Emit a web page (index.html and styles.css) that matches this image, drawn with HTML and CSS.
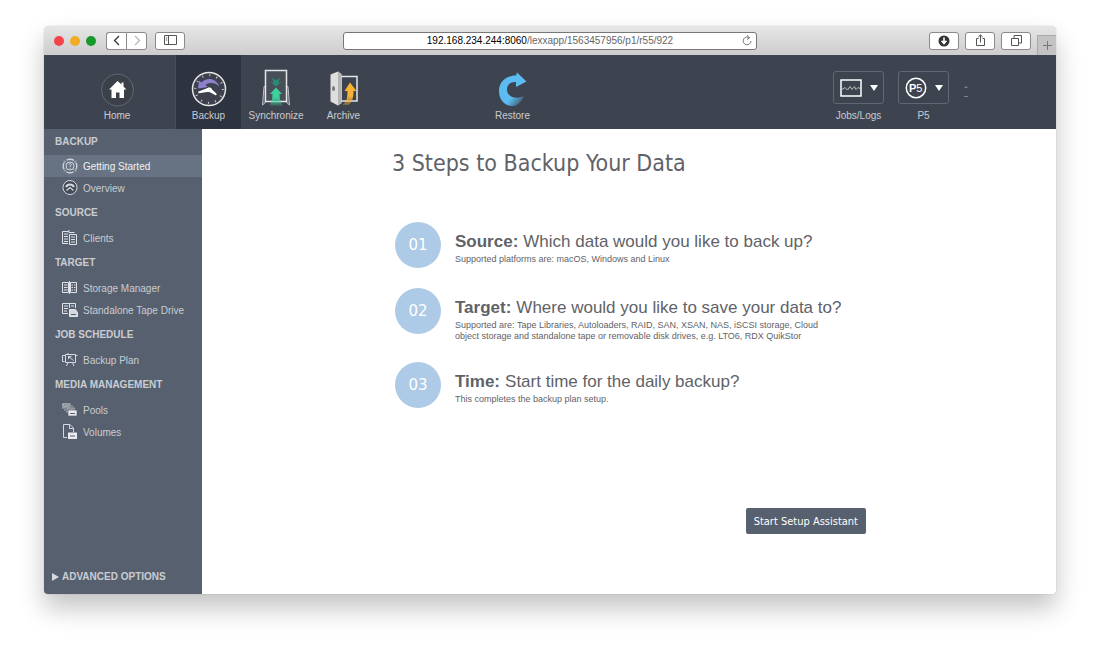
FILE: index.html
```
<!DOCTYPE html>
<html lang="en">
<head>
    <meta charset="UTF-8">
    <meta name="viewport" content="width=device-width, initial-scale=1.0">
    <title>Getting Started</title>
    <link rel="stylesheet" href="styles.css">
</head>
<body>
    <div class="window">
        <div class="titlebar">
            <div class="titlebar-left">
                <div class="lights">
                    <span class="light red"></span>
                    <span class="light yellow"></span>
                    <span class="light green"></span>
                </div>
                <div class="history">
                    <button class="chrome-btn" aria-label="Back">
                        <svg width="8" height="11" viewBox="0 0 8 11" fill="none" stroke="#333" stroke-width="1.3"><path d="M6 1 1.5 5.5 6 10"/></svg>
                    </button>
                    <button class="chrome-btn" aria-label="Forward">
                        <svg width="8" height="11" viewBox="0 0 8 11" fill="none" stroke="#b5b5b5" stroke-width="1.2"><path d="M2 1 6.5 5.5 2 10"/></svg>
                    </button>
                </div>
                <button class="chrome-btn wide" aria-label="Sidebar">
                    <svg width="13" height="11" viewBox="0 0 13 11" fill="none" stroke="#555"><path d="M.5.5h12v9H.5zM4.5.5v9M1.8 3h1.4M1.8 5h1.4"/></svg>
                </button>
            </div>
            <div class="address" role="textbox" aria-label="Address" contenteditable="true" spellcheck="false">
                <span class="url"><span class="host">192.168.234.244:8060</span>/lexxapp/1563457956/p1/r55/922</span>
                <svg class="reload" width="10" height="11" viewBox="0 0 10 11" fill="none" stroke="#777"><path d="M7.5 2.8A3.9 3.9 0 1 0 9 6M5 .3 7.6 2.8 5 4.5"/></svg>
            </div>
            <div class="titlebar-right">
                <button class="chrome-btn wide" aria-label="Downloads">
                    <svg width="12" height="12" viewBox="0 0 12 12"><circle cx="6" cy="6" r="5.5" fill="#333"/><path d="M6 2.6v5M3.6 5.8 6 8.6l2.4-2.8" fill="none" stroke="#fff" stroke-width="1.6"/></svg>
                </button>
                <button class="chrome-btn wide" aria-label="Share">
                    <svg width="11" height="13" viewBox="0 0 11 13" fill="none" stroke="#555"><path d="M3.5 4.5h-2v7h8v-7h-2M5.5 8.5V1M3.3 3 5.5.9 7.7 3"/></svg>
                </button>
                <button class="chrome-btn wide" aria-label="Tabs">
                    <svg width="11" height="11" viewBox="0 0 11 11" fill="none" stroke="#555"><path d="M.5 3.5h7v7h-7zM3 3.5V.5h7.5V8h-3"/></svg>
                </button>
                <button class="new-tab" aria-label="New tab">
                    <svg width="9" height="9" viewBox="0 0 9 9" stroke="#777"><path d="M4.5 0v9M0 4.5h9"/></svg>
                </button>
            </div>
        </div>

        <div class="toolbar">
            <a class="tool home" href="#">
                <svg class="tool-icon" width="34" height="34" viewBox="0 0 34 34"><circle cx="17.5" cy="17" r="16" fill="#3b4049" stroke="#626873"/><path d="M17.5 8 9 16.5h2.5V25H16v-5.500h3.500V25H24v-8.500h2.500L23.500 13.500V9.500h-2v2z" fill="#fff"/></svg>
                <span>Home</span>
            </a>
            <a class="tool active" href="#">
                <svg class="tool-icon" width="36" height="36" viewBox="0 0 36 36">
                    <circle cx="18" cy="18" r="16.5" fill="#3c414d" stroke="#e8e8e8" stroke-width="1.5"/>
                    <circle cx="18" cy="18" r="13.8" fill="none" stroke="#d0d2d8" stroke-width="2.2" stroke-dasharray=".9 6.325"/>
                    <path d="M7 17.5 8 9.500l2.500 2C15 6 25 6.500 28.500 15.500 24 11.500 18 11 14.500 14l2.500 2z" fill="#8e80cf"/>
                    <path d="M18 16.500 7 20.800l.7 1.400L18 20.800l7 3.700.8-1.500-4.800-4.500z" fill="#fff"/>
                    <circle cx="18.5" cy="18.8" r="2.4" fill="#fff"/>
                </svg>
                <span>Backup</span>
            </a>
            <a class="tool sync" href="#">
                <svg class="tool-icon" width="30" height="38" viewBox="0 0 30 38">
                    <defs><linearGradient id="green" x1="0" y1="0" x2="0" y2="1"><stop offset=".55" stop-color="#3ecf9e"/><stop offset="1" stop-color="#3ecf9e" stop-opacity=".25"/></linearGradient></defs>
                    <path d="M5 17.5H3L1.500 36l4-3.500h19l4 3.500L27 17.500h-2" fill="#59606b" stroke="#b9bdc4"/>
                    <path d="M4.500 1.500h21v31h-21z" fill="#484f59" stroke="#e4e6e8" stroke-width="1.5"/>
                    <path d="m11 9 4 2 4-2-1.500 4.500h2.500l-5 4-5-4h2.500z" fill="#2d8874"/>
                    <path d="M15 18.500 9 25h2.500c0 5-1 8-3 11.500h13C19.500 33 18.500 30 18.500 25H21z" fill="url(#green)"/>
                </svg>
                <span>Synchronize</span>
            </a>
            <a class="tool" href="#">
                <svg class="tool-icon" width="30" height="38" viewBox="0 0 30 38">
                    <defs><linearGradient id="gold" x1="0" y1="0" x2="0" y2="1"><stop offset=".6" stop-color="#f9b233"/><stop offset="1" stop-color="#f9b233" stop-opacity=".3"/></linearGradient></defs>
                    <path d="M12 7.500h16V32H12z" fill="#3c434e" stroke="#e4e6e8" stroke-width="1.5"/>
                    <path d="M1.500 5.500 9 2.500l3.500 2.800V34L9 36.500l-7.500-4z" fill="#dedede"/>
                    <path d="M9 2.500v34l3.500-2.500V5.300z" fill="#b4b4b4"/>
                    <ellipse cx="4.5" cy="19.5" rx="1.5" ry="2.5" fill="#77797d"/>
                    <path d="M21 13.500 15.500 22h3c0 7-1 11-5 14h6c4-3 5-8 5-14h3z" fill="url(#gold)"/>
                </svg>
                <span>Archive</span>
            </a>
            <a class="tool restore" href="#">
                <svg class="tool-icon" width="32" height="36" viewBox="0 0 32 36">
                    <defs><linearGradient id="blue" x1="0" y1="0" x2="1" y2="1"><stop offset=".6" stop-color="#5cbcf2"/><stop offset=".9" stop-color="#5cbcf2" stop-opacity=".1"/></linearGradient></defs>
                    <path d="M20 1.500 29.500 10.500 19 16v-5c-6-.5-9 3-9 7.500 0 7 8 10 16.500 7C24 32 19 35.500 14.500 35 7 34.500 2 28 2 20 2 11 9 4.500 19 4.500z" fill="url(#blue)"/>
                </svg>
                <span>Restore</span>
            </a>
            <div class="tool menu">
                <button class="menu-btn" id="jobs" aria-labelledby="jobs-label">
                    <svg width="22" height="20" viewBox="0 0 22 20" fill="none"><path d="M1 2h20v16H1z" stroke="#fff" stroke-width="1.5"/><path d="M2 11.500l3-2 2.500 2.500L10 8.500l2 3 2.500-3 1.500 3 2-2 2 1" stroke="#b8bcc3"/></svg>
                    <svg width="8" height="7" viewBox="0 0 8 7"><path d="M0 1h8L4 7z" fill="#fff"/></svg>
                </button>
                <label id="jobs-label" for="jobs">Jobs/Logs</label>
            </div>
            <div class="tool menu">
                <button class="menu-btn" id="p5" aria-labelledby="p5-label">
                    <svg width="22" height="22" viewBox="0 0 22 22"><circle cx="11" cy="11" r="9.7" fill="none" stroke="#fff" stroke-width="1.5"/><text class="logo" x="4" y="15"><tspan class="logo-p">P</tspan>5</text></svg>
                    <svg width="8" height="7" viewBox="0 0 8 7"><path d="M0 1h8L4 7z" fill="#fff"/></svg>
                </button>
                <label id="p5-label" for="p5">P5</label>
            </div>
            <svg class="grip" width="6" height="12" viewBox="0 0 6 12" fill="#7c828c"><path d="M3 0 5 2H1zM1 10h4v1H1z"/></svg>
        </div>

        <div class="content">
            <nav class="sidebar">
                <h2>BACKUP</h2>
                <a class="active" href="#">
                    <svg width="16" height="16" viewBox="0 0 16 16" fill="none" stroke="#cdd2d8"><circle cx="8" cy="8" r="6.8" stroke-width="1.4" stroke-dasharray="7.5 3.18" stroke-dashoffset="3.7"/><circle cx="8" cy="8" r="4"/><path d="M6.800 6.800c0-1.800 2.600-1.500 2.400 0C9 7.800 8 7.800 8 9M8 9.800v1M2 2.500 4 4.500M14 2.500l-2 2M2 13.500l2-2M14 13.500l-2-2"/></svg>
                    Getting Started
                </a>
                <a href="#">
                    <svg width="16" height="16" viewBox="0 0 16 16" fill="none" stroke="#d5d9de"><circle cx="8" cy="7.5" r="7" fill="#434b58"/><path d="M4 7C5.500 3.500 10.500 3.500 12 7" stroke-width="2"/><path d="M4.500 10.500 8 7.500l3.500 3" stroke-width="1.3"/></svg>
                    Overview
                </a>
                <h2>SOURCE</h2>
                <a href="#">
                    <svg width="16" height="16" viewBox="0 0 16 16" fill="none" stroke="#dfe2e6"><path d="M6 13.500H.5V1.500H7V0M2 4h4M2 6.500h4M2 9h4M2 11.500h4M6.500 2.500h6M7.500 4.500h7v10h-7zM9 7h4M9 9.500h4M9 12h4"/></svg>
                    Clients
                </a>
                <h2>TARGET</h2>
                <a href="#">
                    <svg width="16" height="16" viewBox="0 0 16 16" fill="none" stroke="#dfe2e6"><path d="M.5 2.500h6v10h-6zM8.500 2.500h6v10h-6zM2 5h3.500M2 7.500h3.500M2 10h3.500M9.500 5h1.500M12 5h1.500M9.500 7.500h1.500M12 7.500h1.500M9.500 10h1.500M12 10h1.500M7.500 1v13"/></svg>
                    Storage Manager
                </a>
                <a href="#">
                    <svg width="16" height="16" viewBox="0 0 16 16" fill="none" stroke="#dfe2e6"><path d="M6 11.500H.5V1.500h13V6M7.500 1.500V6M2 4h4M2 6.500h4M2 9h3M9 4h3"/><path d="M7.500 7.500h6l2 3v4h-8z" fill="#d5d9de"/><path d="M9 12.500h5" stroke="#57606e"/></svg>
                    Standalone Tape Drive
                </a>
                <h2>JOB SCHEDULE</h2>
                <a href="#">
                    <svg width="16" height="16" viewBox="0 0 16 16" fill="none" stroke="#d5d9de"><path d="M3.500 2.500h10v8h-10zM6 1v1.500M3.500 3.500h-3v6h2M13.500 3.500h2M6.500 4.500l5 4M6.500 4.500V7M6.500 4.500h3M6 10.500 4.500 14M10.500 10.500 12 14"/></svg>
                    Backup Plan
                </a>
                <h2>MEDIA MANAGEMENT</h2>
                <a href="#">
                    <svg width="16" height="16" viewBox="0 0 16 16" fill="#b9bfc7" stroke="#57606e" stroke-width=".7"><path d="M0 1h9v6H0zM2 3h9v6H2zM4 5h9v6H4z"/><path d="M6 8h9v6H6z" fill="#e9ebee"/><path d="M8 11.500h5" stroke-width="1"/></svg>
                    Pools
                </a>
                <a href="#">
                    <svg width="16" height="16" viewBox="0 0 16 16" fill="none" stroke="#d5d9de"><path d="M5 13.500H1.500V.5H8L11.500 4v4M7.500.5v4h4"/><path d="M6 8.500h9V15H6z" fill="#e9ebee" stroke="none"/><path d="M8 12h5" stroke="#57606e"/></svg>
                    Volumes
                </a>
                <button class="advanced">
                    <svg width="7" height="8" viewBox="0 0 7 8"><path d="M0 0 7 4 0 8z" fill="#d5d9de"/></svg>
                    ADVANCED OPTIONS
                </button>
            </nav>

            <main>
                <div class="guide">
                    <h1>3 Steps to Backup Your Data</h1>
                    <ol class="steps">
                        <li>
                            <span class="number">01</span>
                            <div class="step-text">
                                <h3><b>Source:</b>Which data would you like to back up?</h3>
                                <p>Supported platforms are: macOS, Windows and Linux</p>
                            </div>
                        </li>
                        <li>
                            <span class="number">02</span>
                            <div class="step-text">
                                <h3><b>Target:</b>Where would you like to save your data to?</h3>
                                <p>Supported are: Tape Libraries, Autoloaders, RAID, SAN, XSAN, NAS, iSCSI storage, Cloud object storage and standalone tape or removable disk drives, e.g. LTO6, RDX QuikStor</p>
                            </div>
                        </li>
                        <li>
                            <span class="number">03</span>
                            <div class="step-text">
                                <h3><b>Time:</b>Start time for the daily backup?</h3>
                                <p>This completes the backup plan setup.</p>
                            </div>
                        </li>
                    </ol>
                    <button class="start">Start Setup Assistant</button>
                </div>
            </main>
        </div>
    </div>
</body>
</html>
```
FILE: styles.css
```
* {
    box-sizing: border-box;
}
body {
    margin: 0;
    min-height: 100vh;
    padding: 26px 44px 63px;
    display: flex;
    background: #fff;
    font-family: "Liberation Sans", Arial, sans-serif;
    font-size: 10px;
}
button {
    font: inherit;
    cursor: pointer;
}
a {
    text-decoration: none;
}
h1, h2, h3, p, ol {
    margin: 0;
    padding: 0;
    font-weight: normal;
}
.window {
    flex: 1;
    display: flex;
    flex-direction: column;
    border-radius: 5px 5px 4px 4px;
    overflow: hidden;
    box-shadow: 0 0 1px rgba(0, 0, 0, 0.4), 0 14px 26px rgba(0, 0, 0, 0.24);
}

/* browser bar */
.titlebar {
    display: grid;
    grid-template-columns: 1fr 41% 1fr;
    align-items: center;
    height: 29px;
    background: linear-gradient(#e6e6e6, #cdcdcd);
}
.titlebar-left, .titlebar-right, .lights, .history {
    display: flex;
    align-items: center;
}
.titlebar-left {
    gap: 8px;
    padding-left: 10px;
}
.lights {
    gap: 6px;
    margin-right: 2px;
}
.light {
    width: 10px;
    height: 10px;
    border-radius: 50%;
}
.red {
    background: #f4434a;
}
.yellow {
    background: #f3ac25;
}
.green {
    background: #17982c;
}
.chrome-btn {
    display: flex;
    align-items: center;
    justify-content: center;
    width: 20px;
    height: 18px;
    padding: 0;
    background: #fff;
    border: 1px solid #8a8a8a;
    border-radius: 3px;
}
.chrome-btn.wide {
    width: 30px;
}
.history .chrome-btn:first-child {
    border-right: none;
    border-radius: 3px 0 0 3px;
}
.history .chrome-btn:last-child {
    border-radius: 0 3px 3px 0;
    width: 21px;
}
.address {
    display: flex;
    align-items: center;
    height: 18px;
    padding: 0 4px 0 14px;
    background: #fff;
    border: 1px solid #777;
    border-radius: 3px;
    color: #666;
    white-space: nowrap;
}
.url {
    flex: 1;
    text-align: center;
}
.host {
    color: #000;
}
.titlebar-right {
    justify-content: flex-end;
    gap: 6px;
    height: 29px;
}
.new-tab {
    align-self: flex-end;
    display: flex;
    align-items: center;
    justify-content: center;
    width: 19px;
    height: 20px;
    padding: 0;
    background: #c3c3c3;
    border: 1px solid #a9a9a9;
    border-width: 1px 0 0 1px;
}

/* main toolbar */
.toolbar {
    display: flex;
    align-items: stretch;
    height: 74px;
    padding-right: 87px;
    background: #3e444f;
}
.tool {
    display: flex;
    flex-direction: column;
    align-items: center;
    justify-content: flex-end;
    gap: 3px;
    width: 65px;
    padding-bottom: 7px;
    color: #c9ccd1;
    line-height: 12px;
}
.tool.home {
    width: 132px;
    padding-right: 1px;
    padding-left: 16px;
    border-right: 1px solid #484e59;
}
.tool.active {
    background: #2d333f;
}
.tool.sync {
    width: 70px;
}
.tool.restore {
    margin-left: 104px;
    margin-right: auto;
}
.tool.menu {
    gap: 6px;
}
.menu-btn {
    display: flex;
    align-items: center;
    justify-content: center;
    gap: 8px;
    width: 51px;
    height: 33px;
    padding: 0;
    background: transparent;
    border: 1px solid #616772;
    border-radius: 3px;
}
.logo {
    fill: #fff;
    font-size: 11px;
}
.logo-p {
    font-weight: bold;
}
.grip {
    align-self: center;
    margin-left: 7px;
}

/* sidebar */
.content {
    flex: 1;
    display: flex;
}
.sidebar {
    display: flex;
    flex-direction: column;
    width: 158px;
    background: #57606e;
    color: #c9cdd3;
}
.sidebar h2 {
    padding-left: 11px;
    font-size: 10px;
    font-weight: bold;
    line-height: 28px;
}
.sidebar h2:first-child {
    line-height: 26px;
}
.sidebar a {
    display: flex;
    align-items: center;
    gap: 5px;
    height: 22px;
    padding-left: 18px;
    color: inherit;
}
.sidebar a.active {
    background: #677283;
    color: #f0f2f4;
}
.advanced {
    display: flex;
    align-items: center;
    gap: 3px;
    margin-top: auto;
    padding: 0 8px 12px;
    background: none;
    border: none;
    color: #c9cdd3;
    font-weight: bold;
}

/* setup guide */
main {
    flex: 1;
    background: #fff;
    color: #5f6268;
}
.guide {
    display: flex;
    flex-direction: column;
    max-width: 474px;
    height: 100%;
    margin: 0 auto;
    padding: 18px 0 60px;
}
h1, .start {
    font-family: "DejaVu Sans Condensed", "Noto Sans", sans-serif;
}
h1 {
    font-size: 23px;
    line-height: 32px;
}
.steps {
    display: flex;
    flex-direction: column;
    gap: 20px;
    margin-top: 43px;
    padding-left: 3px;
    list-style: none;
}
.steps li {
    display: flex;
    gap: 14px;
}
.number {
    flex: none;
    width: 46px;
    height: 46px;
    border-radius: 50%;
    background: #adcae6;
    color: #fff;
    font-family: "DejaVu Sans", sans-serif;
    font-size: 15px;
    line-height: 46px;
    text-align: center;
}
.step-text {
    padding-top: 10px;
}
.step-text h3 {
    font-size: 17px;
    line-height: 20px;
    white-space: nowrap;
}
.step-text b {
    margin-right: 5px;
}
.step-text p {
    max-width: 380px;
    margin-top: 2px;
    font-size: 9px;
    line-height: 11px;
}
.start {
    align-self: flex-end;
    height: 26px;
    margin-top: auto;
    padding: 0 8px;
    background: #57606e;
    border: none;
    border-radius: 2px;
    color: #fff;
    font-size: 11px;
}
```
